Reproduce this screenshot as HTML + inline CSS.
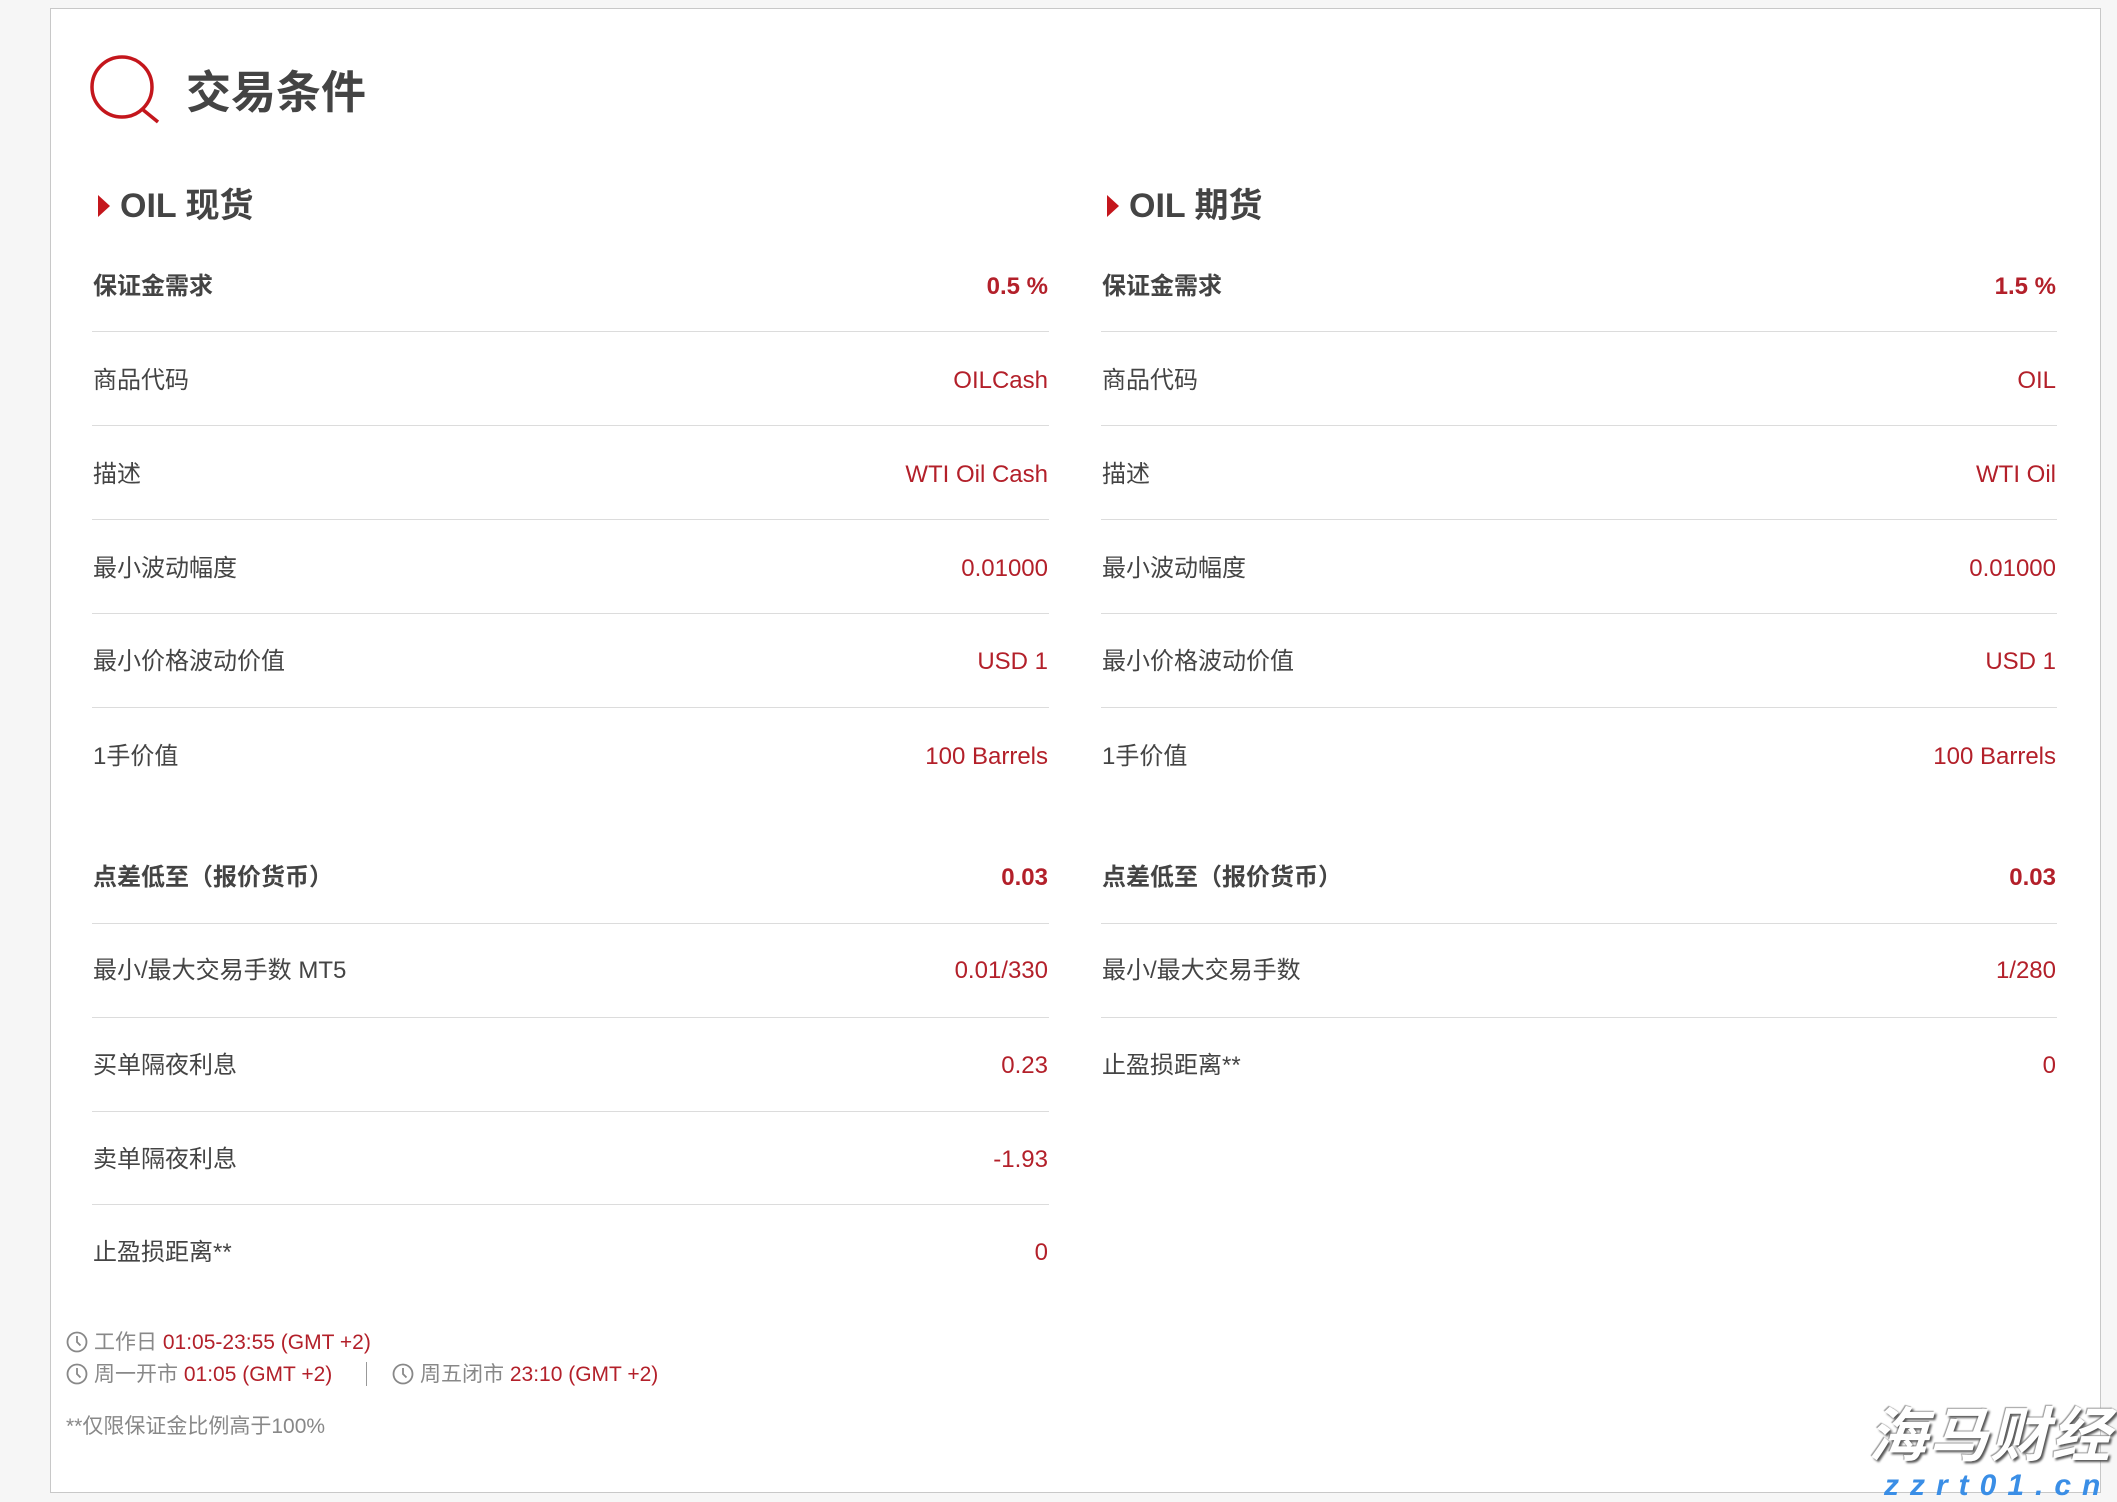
<!DOCTYPE html>
<html><head><meta charset="utf-8"><style>
*{margin:0;padding:0;box-sizing:border-box}
body{width:2117px;height:1501px;background:#f6f6f6;position:relative;overflow:hidden;font-family:"Liberation Sans","Noto Sans CJK SC",sans-serif;color:#444}
.box{position:absolute;left:50px;top:8px;width:2051px;height:1485px;background:#fff;border:1px solid #c8c8c8}
.a{position:absolute}
.r{position:absolute;height:40px;line-height:40px;font-size:24px;white-space:nowrap;margin-top:2px}
.l1{left:93px}.l2{left:1102px}
.v1{right:1069px;text-align:right}.v2{right:61px;text-align:right}
.red{color:#b3202a}
.b{font-weight:bold}
.d{position:absolute;height:1px;background:#dcdcdc}
.h{position:absolute;font-size:34px;font-weight:bold;line-height:40px;height:40px}
.tri{position:absolute;width:0;height:0;border-top:11px solid transparent;border-bottom:11px solid transparent;border-left:12px solid #c4161c}
.f{position:absolute;font-size:21px;color:#888;line-height:30px;white-space:nowrap}
.f span{color:#b3202a}
</style></head><body>
<div class="box"></div>
<svg class="a" style="left:86px;top:52px" width="80" height="76" viewBox="0 0 80 76"><circle cx="36" cy="35" r="30" fill="none" stroke="#c4161c" stroke-width="3.5"/><line x1="56" y1="57" x2="72" y2="70" stroke="#c4161c" stroke-width="3.5"/></svg>
<div class="a b" style="left:186px;top:67px;font-size:45px;line-height:52px;color:#444">交易条件</div>

<div class="tri" style="left:98px;top:195px"></div>
<div class="h" style="left:120px;top:186px">OIL 现货</div>
<div class="tri" style="left:1107px;top:195px"></div>
<div class="h" style="left:1129px;top:186px">OIL 期货</div>

<div class="r l1 b" style="top:265px">保证金需求</div><div class="r v1 red b" style="top:265px">0.5 %</div>
<div class="d" style="left:92px;width:957px;top:331px"></div>
<div class="r l1" style="top:359px">商品代码</div><div class="r v1 red" style="top:359px">OILCash</div>
<div class="d" style="left:92px;width:957px;top:425px"></div>
<div class="r l1" style="top:453px">描述</div><div class="r v1 red" style="top:453px">WTI Oil Cash</div>
<div class="d" style="left:92px;width:957px;top:519px"></div>
<div class="r l1" style="top:547px">最小波动幅度</div><div class="r v1 red" style="top:547px">0.01000</div>
<div class="d" style="left:92px;width:957px;top:613px"></div>
<div class="r l1" style="top:640px">最小价格波动价值</div><div class="r v1 red" style="top:640px">USD 1</div>
<div class="d" style="left:92px;width:957px;top:707px"></div>
<div class="r l1" style="top:735px">1手价值</div><div class="r v1 red" style="top:735px">100 Barrels</div>
<div class="r l1 b" style="top:856px">点差低至（报价货币）</div><div class="r v1 red b" style="top:856px">0.03</div>
<div class="d" style="left:92px;width:957px;top:923px"></div>
<div class="r l1" style="top:949px">最小/最大交易手数 MT5</div><div class="r v1 red" style="top:949px">0.01/330</div>
<div class="d" style="left:92px;width:957px;top:1017px"></div>
<div class="r l1" style="top:1044px">买单隔夜利息</div><div class="r v1 red" style="top:1044px">0.23</div>
<div class="d" style="left:92px;width:957px;top:1111px"></div>
<div class="r l1" style="top:1138px">卖单隔夜利息</div><div class="r v1 red" style="top:1138px">-1.93</div>
<div class="d" style="left:92px;width:957px;top:1204px"></div>
<div class="r l1" style="top:1231px">止盈损距离**</div><div class="r v1 red" style="top:1231px">0</div>

<div class="r l2 b" style="top:265px">保证金需求</div><div class="r v2 red b" style="top:265px">1.5 %</div>
<div class="d" style="left:1101px;width:956px;top:331px"></div>
<div class="r l2" style="top:359px">商品代码</div><div class="r v2 red" style="top:359px">OIL</div>
<div class="d" style="left:1101px;width:956px;top:425px"></div>
<div class="r l2" style="top:453px">描述</div><div class="r v2 red" style="top:453px">WTI Oil</div>
<div class="d" style="left:1101px;width:956px;top:519px"></div>
<div class="r l2" style="top:547px">最小波动幅度</div><div class="r v2 red" style="top:547px">0.01000</div>
<div class="d" style="left:1101px;width:956px;top:613px"></div>
<div class="r l2" style="top:640px">最小价格波动价值</div><div class="r v2 red" style="top:640px">USD 1</div>
<div class="d" style="left:1101px;width:956px;top:707px"></div>
<div class="r l2" style="top:735px">1手价值</div><div class="r v2 red" style="top:735px">100 Barrels</div>
<div class="r l2 b" style="top:856px">点差低至（报价货币）</div><div class="r v2 red b" style="top:856px">0.03</div>
<div class="d" style="left:1101px;width:956px;top:923px"></div>
<div class="r l2" style="top:949px">最小/最大交易手数</div><div class="r v2 red" style="top:949px">1/280</div>
<div class="d" style="left:1101px;width:956px;top:1017px"></div>
<div class="r l2" style="top:1044px">止盈损距离**</div><div class="r v2 red" style="top:1044px">0</div>

<svg class="a" style="left:66px;top:1331px" width="22" height="22" viewBox="0 0 22 22"><circle cx="11" cy="11" r="9.5" fill="none" stroke="#888" stroke-width="1.8"/><path d="M11 5V11L14.5 14.5" fill="none" stroke="#888" stroke-width="1.8"/></svg>
<div class="f" style="left:94px;top:1328px">工作日 <span>01:05-23:55 (GMT +2)</span></div>
<svg class="a" style="left:66px;top:1363px" width="22" height="22" viewBox="0 0 22 22"><circle cx="11" cy="11" r="9.5" fill="none" stroke="#888" stroke-width="1.8"/><path d="M11 5V11L14.5 14.5" fill="none" stroke="#888" stroke-width="1.8"/></svg>
<div class="f" style="left:94px;top:1360px">周一开市 <span>01:05 (GMT +2)</span></div>
<div class="a" style="left:366px;top:1362px;width:1px;height:24px;background:#999"></div>
<svg class="a" style="left:392px;top:1363px" width="22" height="22" viewBox="0 0 22 22"><circle cx="11" cy="11" r="9.5" fill="none" stroke="#888" stroke-width="1.8"/><path d="M11 5V11L14.5 14.5" fill="none" stroke="#888" stroke-width="1.8"/></svg>
<div class="f" style="left:420px;top:1360px">周五闭市 <span>23:10 (GMT +2)</span></div>
<div class="f" style="left:66px;top:1412px">**仅限保证金比例高于100%</div>

<div class="a" style="left:1868px;top:1398px;font-size:59px;line-height:66px;font-weight:bold;font-style:italic;color:#fff;text-shadow:2px 2px 2px #555,-1px -1px 1px #999;font-family:'Noto Sans CJK SC',sans-serif;letter-spacing:2px">海马财经</div>
<div class="a" style="left:1884px;top:1470px;font-size:30px;line-height:32px;font-weight:bold;font-style:italic;color:#3a8ee6;letter-spacing:11px;font-family:'Liberation Sans',sans-serif">zzrt01.cn</div>
</body></html>
